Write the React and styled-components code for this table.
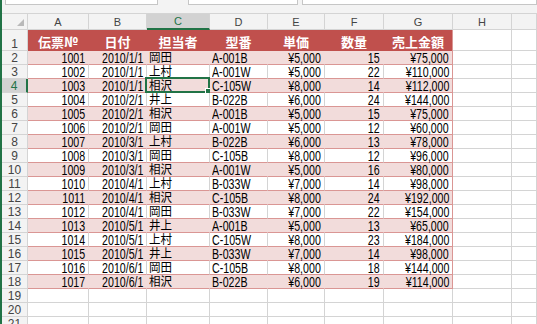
import styled, { createGlobalStyle } from "styled-components";

const GlobalStyle = createGlobalStyle`
  html, body { margin: 0; padding: 0; background: #fff; overflow: hidden; }
  body { font-family: "Liberation Sans", "Noto Sans CJK JP", sans-serif; }
`;

const GRID = "26px 61px 58px 63px 58px 57px 59px 69px 59px 1fr";
const GREEN = "#217346";
const GRIDLINE = "#d4d4d4";
const RED = "#c0504d";
const PINK = "#f2dcdb";
const TABLE_LINE = "#da9694";

const rows = [
  [1001, "2010/1/1", "岡田", "A-001B", 5000, 15],
  [1002, "2010/1/1", "上村", "A-001W", 5000, 22],
  [1003, "2010/1/1", "相沢", "C-105W", 8000, 14],
  [1004, "2010/2/1", "井上", "B-022B", 6000, 24],
  [1005, "2010/2/1", "相沢", "A-001B", 5000, 15],
  [1006, "2010/2/1", "岡田", "A-001W", 5000, 12],
  [1007, "2010/3/1", "上村", "B-022B", 6000, 13],
  [1008, "2010/3/1", "岡田", "C-105B", 8000, 12],
  [1009, "2010/3/1", "相沢", "A-001W", 5000, 16],
  [1010, "2010/4/1", "上村", "B-033W", 7000, 14],
  [1011, "2010/4/1", "相沢", "C-105B", 8000, 24],
  [1012, "2010/4/1", "岡田", "B-033W", 7000, 22],
  [1013, "2010/5/1", "井上", "A-001B", 5000, 13],
  [1014, "2010/5/1", "上村", "C-105W", 8000, 23],
  [1015, "2010/5/1", "井上", "B-033W", 7000, 14],
  [1016, "2010/6/1", "岡田", "C-105B", 8000, 18],
  [1017, "2010/6/1", "相沢", "B-022B", 6000, 19],
];

const yen = (n) => "¥" + n.toLocaleString("en-US");

const Window = styled.div`
  height: 324px;
  border-left: 2px solid ${GREEN};
  background: #fff;
  overflow: hidden;
`;

const FormulaBar = styled.div`
  height: 13px;
  background: #f3f3f3;
  border-bottom: 1px solid ${GRIDLINE};
  display: flex;
  align-items: flex-start;
`;

const Field = styled.div`
  height: 4px;
  width: ${(p) => p.$w};
  margin-left: ${(p) => p.$ml}px;
  background: #fff;
  border: 1px solid #c6c6c6;
  border-top: none;
  flex: ${(p) => (p.$grow ? 1 : "none")};
`;

const Row = styled.div`
  display: grid;
  grid-template-columns: ${GRID};
  height: ${(p) => p.$h}px;
`;

const Corner = styled.div`
  background: #f3f3f3;
  border-right: 1px solid ${GRIDLINE};
  border-bottom: 1px solid ${GRIDLINE};
  display: flex;
  align-items: flex-end;
  justify-content: flex-end;
  padding: 0 3px 3px 0;
  box-sizing: border-box;
`;

const ColHead = styled.div`
  background: ${(p) => (p.$active ? "#d2d2d2" : "#f3f3f3")};
  border-right: 1px solid ${GRIDLINE};
  border-bottom: ${(p) => (p.$active ? `2px solid ${GREEN}` : `1px solid ${GRIDLINE}`)};
  color: ${(p) => (p.$active ? GREEN : "#444")};
  font-size: 11px;
  display: flex;
  align-items: center;
  justify-content: center;
  box-sizing: border-box;
`;

const RowHead = styled.div`
  background: ${(p) => (p.$active ? "#d2d2d2" : "#f3f3f3")};
  border-right: ${(p) => (p.$active ? `2px solid ${GREEN}` : `1px solid ${GRIDLINE}`)};
  border-bottom: 1px solid ${GRIDLINE};
  color: ${(p) => (p.$active ? GREEN : "#444")};
  font-size: 12px;
  line-height: 12px;
  display: flex;
  align-items: flex-end;
  justify-content: center;
  box-sizing: border-box;
`;

const bg = { head: RED, pink: PINK, white: "#fff", none: "#fff" };
const vline = { head: RED, pink: PINK, white: GRIDLINE, none: GRIDLINE };
const hline = { head: RED, pink: TABLE_LINE, white: TABLE_LINE, none: GRIDLINE };

const Cell = styled.div`
  position: relative;
  background: ${(p) => bg[p.$band]};
  border-right: 1px solid ${(p) => (p.$edge ? TABLE_LINE : vline[p.$band])};
  border-bottom: 1px solid ${(p) => hline[p.$band]};
  display: flex;
  align-items: flex-end;
  justify-content: ${(p) => (p.$align === "right" ? "flex-end" : "flex-start")};
  padding: 0 3px 0 2px;
  box-sizing: border-box;
  white-space: nowrap;
`;

const Value = styled.span`
  display: inline-block;
  font-size: ${(p) => p.$size}px;
  line-height: 12px;
  color: #000;
  transform: scaleX(${(p) => p.$sx});
  transform-origin: ${(p) => (p.$align === "right" ? "right" : "left")} center;
`;

const HeadCell = styled.div`
  background: ${RED};
  border-right: 1px solid ${(p) => (p.$edge ? TABLE_LINE : RED)};
  display: flex;
  align-items: center;
  justify-content: center;
  padding-top: 2px;
  box-sizing: border-box;
  color: #fff;
  font-family: "Noto Sans CJK JP", sans-serif;
  font-weight: 700;
  font-size: 13px;
  white-space: nowrap;
`;

const Blank = styled.div`
  border-right: 1px solid ${GRIDLINE};
  border-bottom: 1px solid ${GRIDLINE};
`;

const Selection = styled.div`
  position: absolute;
  top: -2px;
  left: -2px;
  right: -1px;
  bottom: -1px;
  border: 2px solid ${GREEN};
  pointer-events: none;
`;

const Handle = styled.div`
  position: absolute;
  right: -4px;
  bottom: -4px;
  width: 5px;
  height: 5px;
  background: ${GREEN};
  border: 1px solid #fff;
`;

const letters = ["A", "B", "C", "D", "E", "F", "G", "H", ""];
const headers = ["伝票№", "日付", "担当者", "型番", "単価", "数量", "売上金額"];
const aligns = ["right", "right", "left", "left", "right", "right", "right"];
const sizes = [14, 14, 12, 14, 14, 14, 14];
const scales = [0.76, 0.76, 0.96, 0.76, 0.76, 0.76, 0.76];

export default function App() {
  return (
    <>
      <GlobalStyle />
      <Window>
        <FormulaBar>
          <Field $w="151px" $ml={3} />
          <Field $w="108px" $ml={30} />
          <Field $ml={4} $grow />
        </FormulaBar>
        <Row $h={16}>
          <Corner>
            <svg width="7" height="7" viewBox="0 0 7 7">
              <polygon points="7,0 7,7 0,7" fill="#b9b9b9" />
            </svg>
          </Corner>
          {letters.map((l, i) => (
            <ColHead key={i} $active={l === "C"}>
              {l}
            </ColHead>
          ))}
        </Row>
        <Row $h={21}>
          <RowHead>1</RowHead>
          {headers.map((h, i) => (
            <HeadCell key={h} $edge={i === 6}>
              {h}
            </HeadCell>
          ))}
          <Blank />
          <Blank />
        </Row>
        {rows.map((r, i) => {
          const band = i % 2 === 0 ? "pink" : "white";
          const values = [r[0], r[1], r[2], r[3], yen(r[4]), r[5], yen(r[4] * r[5])];
          const rowNo = i + 2;
          return (
            <Row $h={14} key={r[0]}>
              <RowHead $active={rowNo === 4}>{rowNo}</RowHead>
              {values.map((v, j) => (
                <Cell key={j} $band={band} $align={aligns[j]} $edge={j === 6}>
                  <Value $size={sizes[j]} $sx={scales[j]} $align={aligns[j]}>
                    {v}
                  </Value>
                  {rowNo === 4 && j === 2 && (
                    <Selection>
                      <Handle />
                    </Selection>
                  )}
                </Cell>
              ))}
              <Blank />
              <Blank />
            </Row>
          );
        })}
        {[19, 20, 21].map((n) => (
          <Row $h={14} key={n}>
            <RowHead>{n}</RowHead>
            {letters.map((l, j) => (
              <Blank key={j} />
            ))}
          </Row>
        ))}
      </Window>
    </>
  );
}
